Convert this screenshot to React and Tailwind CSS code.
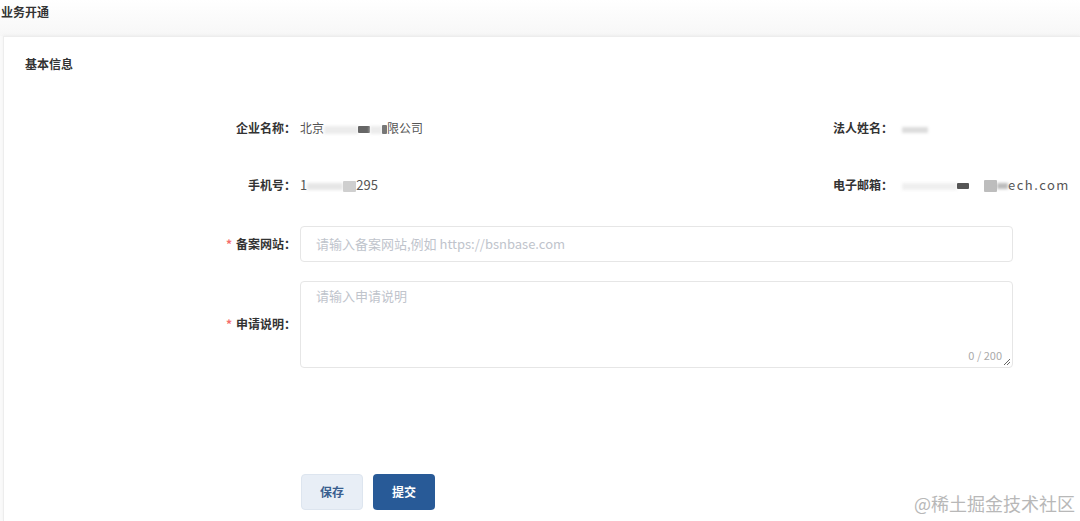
import React from "react";

const font = { fontFamily: '"Noto Sans CJK SC", "Noto Sans", sans-serif' };

const Label = ({ children, required }) => (
  <div className="w-[296px] shrink-0 text-right text-[12px] font-bold text-[#333] pr-[4px]">
    {required && <span className="text-[#f56c6c] mr-[4px]">*</span>}
    {children}
  </div>
);

// masked (blurred-out) part of a value
const Smudge = ({ w, h = 8, c = "#ececec" }) => (
  <span
    className="inline-block align-middle blur-[1.5px]"
    style={{ width: w, height: h, background: c }}
  />
);

const Block = ({ w, h, c }) => (
  <span
    className="inline-block align-middle blur-[0.5px] rounded-[1px]"
    style={{ width: w, height: h, background: c }}
  />
);

export default function App() {
  return (
    <div className="relative w-[1080px] h-[521px] overflow-hidden bg-[#fafafa] text-[#333]" style={font}>
      <div className="h-[36px] pt-[3px] pl-[1px] text-[12px] font-bold text-[#333] bg-gradient-to-b from-white to-[#f7f7f7]">
        业务开通
      </div>
      <div className="ml-[3px] h-[485px] bg-white border-t border-l border-[#ededed] shadow-[0_-1px_3px_rgba(0,0,0,0.04)]">
        <div className="pl-[21px] pt-[18px] text-[12px] font-bold text-[#333]">基本信息</div>

        <div className="mt-[46px] flex items-center text-[12px]">
          <Label>企业名称：</Label>
          <div className="w-[533px] text-[#555] whitespace-nowrap">
            北京
            <Smudge w="34px" />
            <Block w="12px" h="7px" c="#666" />
            <Smudge w="12px" />
            <Block w="5px" h="9px" c="#777" />
            限公司
          </div>
          <div className="text-[12px] font-bold text-[#333] w-[69px]">法人姓名：</div>
          <div className="text-[#555]">
            <Smudge w="26px" h="6px" c="#dcdcdc" />
          </div>
        </div>

        <div className="mt-[38px] flex items-center text-[12px]">
          <Label>手机号：</Label>
          <div className="w-[533px] text-[#555] whitespace-nowrap text-[13px]">
            1
            <Smudge w="36px" h="7px" c="#e6e6e6" />
            <Block w="13px" h="11px" c="#cfcfcf" />
            295
          </div>
          <div className="text-[12px] font-bold text-[#333] w-[69px]">电子邮箱：</div>
          <div className="text-[#555] whitespace-nowrap text-[13px]">
            <Smudge w="55px" h="7px" c="#efefef" />
            <Block w="12px" h="6px" c="#555" />
            <span className="inline-block w-[15px]" />
            <Block w="13px" h="12px" c="#bdbdbd" />
            <Smudge w="11px" h="6px" c="#bbb" />
            <span className="tracking-[1.5px]">ech.com</span>
          </div>
        </div>

        <div className="mt-[31px] flex items-center">
          <Label required>备案网站：</Label>
          <div className="w-[713px] h-[36px] border border-[#e6e6e6] rounded-[4px] flex items-center px-[15px] text-[13px] text-[#c0c4cc]">
            请输入备案网站,例如 https://bsnbase.com
          </div>
        </div>

        <div className="mt-[19px] flex items-center">
          <Label required>申请说明：</Label>
          <div className="relative w-[713px] h-[87px] border border-[#e6e6e6] rounded-[4px] px-[15px] pt-[4px] text-[13px] text-[#c0c4cc]">
            请输入申请说明
            <span className="absolute right-[10px] bottom-[3px] text-[11px] text-[#aaa]">0 / 200</span>
            <svg className="absolute right-[1px] bottom-[1px]" width="8" height="8" viewBox="0 0 8 8">
              <path d="M7 1 L1 7 M7 4 L4 7" stroke="#666" strokeWidth="1" />
            </svg>
          </div>
        </div>

        <div className="mt-[106px] flex gap-[10px] pl-[297px]">
          <button className="w-[62px] h-[36px] rounded-[4px] bg-[#e8eef6] border border-[#dde5ef] text-[12px] font-bold text-[#3a5f8f]">
            保存
          </button>
          <button className="w-[62px] h-[36px] rounded-[4px] bg-[#285a97] text-[12px] font-bold text-white">
            提交
          </button>
        </div>
      </div>

      <div className="absolute right-[5px] bottom-[4px] text-[18px] text-[#b8b8b8]" style={{ fontFamily: '"Noto Sans CJK SC", sans-serif', textShadow: "0 0 2px #fff" }}>
        @稀土掘金技术社区
      </div>
    </div>
  );
}
